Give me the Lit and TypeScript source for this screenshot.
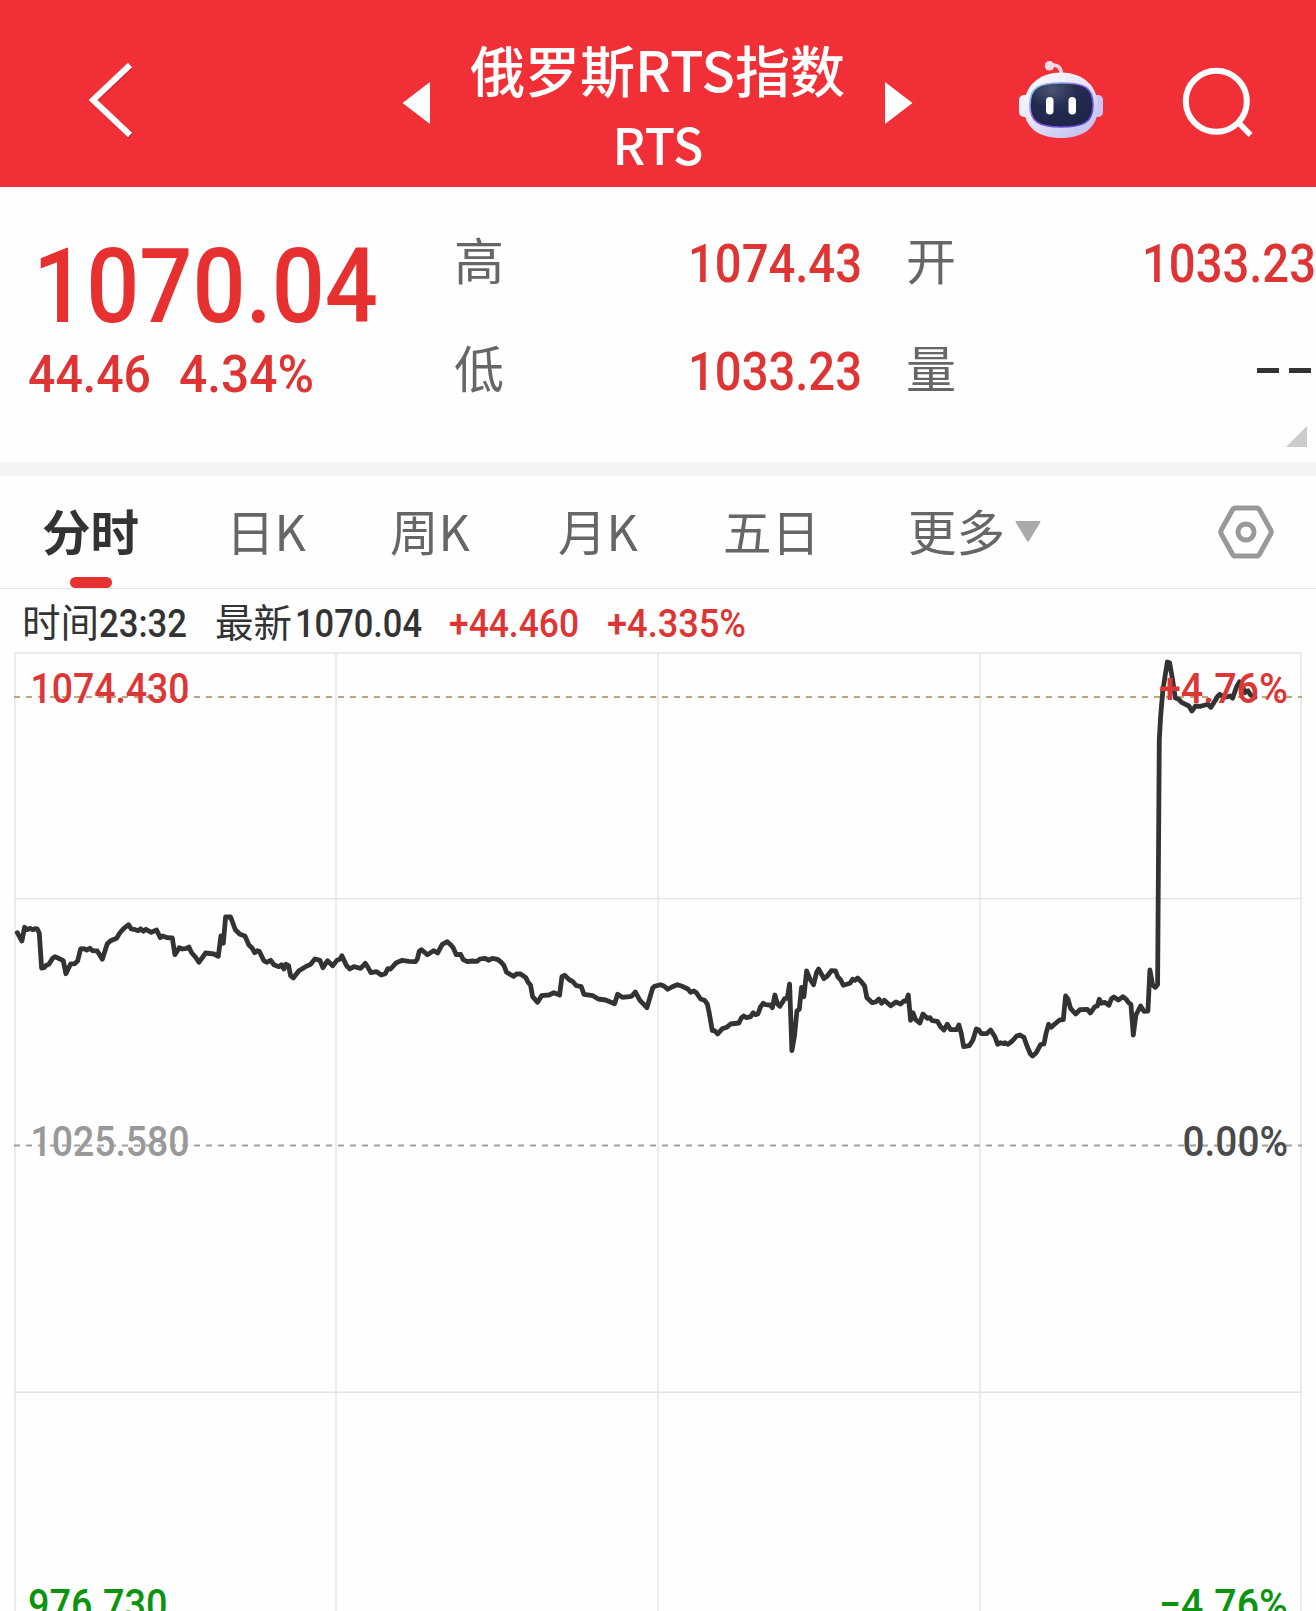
import { LitElement, html, svg, css } from "lit";
import { customElement, property } from "lit/decorators.js";

/** Figures set to a fixed run length; the box is exactly as tall as the digits. */
@customElement("fit-figure")
class FitFigure extends LitElement {
  @property() value = "";
  @property({ type: Number }) run = 100;
  @property({ type: Number }) cap = 30;
  @property({ type: Number }) weight = 500;

  static styles = css`
    :host { display: block; flex: none; }
    svg { display: block; overflow: visible; }
    text {
      font-family: Roboto, "Liberation Sans", sans-serif;
      fill: currentColor;
      white-space: pre;
    }
  `;

  render() {
    return html`<svg width=${this.run} height=${this.cap}>
      <text x="0" y=${this.cap} font-size=${this.cap / 0.711} font-weight=${this.weight}
        textLength=${this.run} lengthAdjust="spacingAndGlyphs">${this.value}</text>
    </svg>`;
  }
}

// Price trace, in thirds of a pixel; each part starts at its own x offset.
const TRACE: [number, string][] = [
  [0, "50,158 64,183 72,142 80,149 88,145 96,149 103,146 110,147 116,160 123,264 130,263 137,256 145,253 155,236 163,230 174,235 188,242 196,281 210,252 222,251 231,243 240,207 250,206 258,210 268,205 276,212 290,213 305,238 320,191 330,182 348,175 357,160 370,145 384,134 392,147 404,149 413,152 420,146 428,154 436,148 452,157 468,150 479,173 486,168 500,173 515,174 523,224 536,203 545,207 558,205 565,201 573,218 585,232 595,247 615,219 640,222 653,229 661,168 668,190 675,111 690,111 704,149 718,163 733,168 745,195 755,205 762,218 770,212 776,214 790,242 798,247 810,241 820,254 835,260 843,254 850,267 856,253 864,257 870,287 878,294 895,272 915,260 930,253 943,237 958,241 967,263 981,242 996,257 1010,240 1018,238 1024,227 1038,257 1048,267 1060,260 1080,265 1094,250 1102,262 1111,278 1128,275 1142,285 1154,281 1162,266 1170,267 1187,248 1205,241 1225,244 1244,245 1250,238 1256,213 1263,209 1280,224 1299,212 1311,219 1325,193"],
  [1290, "50,185 60,194 67,202 77,224 90,223 98,239 110,245 125,243 140,244 148,237 162,235 175,241 185,235 200,238 210,245 220,256 228,277 240,284 249,289 257,282 270,282 286,293 292,306 300,316 306,350 321,367 333,347 355,345 370,338 387,345 394,290 402,286 417,300 427,305 437,317 452,320 460,343 487,347 503,357 525,360 552,371 561,343 575,352 603,349 614,336 628,361 649,383 666,325 672,319 690,314 700,318 712,328 725,320 740,314 755,319 772,327 780,337 790,333 797,338 810,357 822,361 830,372 836,400 845,452 852,452 861,462 875,446 888,442 900,432 925,429 932,414 940,408 948,413 960,410 968,398 975,404 982,402 990,380 998,370 1005,374 1018,375 1025,383 1033,345 1040,371 1048,379 1062,356 1070,355 1077,312 1084,512 1092,465 1099,393 1106,388 1113,322 1120,350 1128,273 1138,297 1149,314 1158,277 1164,267 1180,296 1190,288 1202,272 1215,273 1222,291 1230,299 1238,316 1258,310 1266,298 1273,301 1281,294 1292,305 1302,318 1309,353 1325,368"],
  [2580, "45,366 55,357 63,370 71,361 90,377 106,366 120,372 130,363 137,363 143,345 150,421 157,398 165,419 178,429 187,402 200,415 208,413 215,422 230,424 240,440 250,450 260,433 270,449 288,449 295,435 302,460 309,500 326,497 337,480 347,447 355,450 362,461 378,461 390,450 403,470 411,493 420,488 430,491 433,488 442,493 455,483 468,468 478,465 490,472 500,500 509,521 516,528 527,518 540,494 550,492 557,457 564,433 572,442 585,430 597,420 608,419 615,348 622,357 630,385 645,402 658,389 680,388 689,399 703,380 710,378 716,358 723,370 732,367 745,376 752,357 760,351 773,360 787,350 797,358 803,367 811,373 818,465 826,405 840,378 850,394 862,393 868,270 876,315 884,322 891,314 894,-120 896,-420 900,-490 907,-570 920,-654 927,-652 936,-600 944,-546 953,-543 963,-533 985,-522 994,-507 1005,-522 1020,-521 1042,-527 1051,-518 1065,-540 1072,-552 1078,-557 1090,-548 1110,-552 1116,-545 1128,-580 1137,-595 1145,-585 1152,-562 1162,-568 1170,-555 1183,-548"],
];

const TOP = 589; // page y at which the plot begins
const tracePoints = TRACE.map(([ox, pts]) =>
  pts.split(" ").map((p) => {
    const [x, y] = p.split(",").map(Number);
    return `${((x + ox) / 3 + 0.6).toFixed(1)},${(880 - TOP + y / 3).toFixed(1)}`;
  }).join(" ")
).join(" ");

@customElement("price-chart")
class PriceChart extends LitElement {
  static styles = css`
    :host { display: block; }
    svg { display: block; }
    text { font-family: Roboto, "Liberation Sans", sans-serif; font-weight: 500; }
  `;

  private label(x: number, base: number, run: number, value: string, color: string) {
    return svg`<text x=${x} y=${base - TOP} font-size="42" textLength=${run}
      lengthAdjust="spacingAndGlyphs" fill=${color}>${value}</text>`;
  }

  render() {
    return html`<svg width="1316" height="1022" viewBox="0 0 1316 1022">
      <g stroke="#ebebeb" stroke-width="2" fill="none">
        <path d="M14 64H1302M15 64V1022M336 64V1022M658 64V1022M980 64V1022M1301 64V1022"/>
        <path stroke="#e2e2e2" stroke-width="1.4" d="M15 309.6H1301M15 803.3H1301"/>
      </g>
      <path d="M14 108H1302" stroke="#bda67c" stroke-width="2" stroke-dasharray="6 6"/>
      <path d="M14 556.5H1302" stroke="#a0a0a0" stroke-width="2.2" stroke-dasharray="6 6"/>
      <polyline points=${tracePoints} fill="none" stroke="#333" stroke-width="4.8"
        stroke-linejoin="round" stroke-linecap="round"/>
      ${this.label(30.5, 702.7, 159, "1074.430", "#dc3636")}
      ${this.label(1159, 702.7, 129, "+4.76%", "#dc3636")}
      ${this.label(30.5, 1155.7, 159, "1025.580", "#999")}
      ${this.label(1182.5, 1155.7, 105.5, "0.00%", "#4a4a4a")}
      ${this.label(28, 1618.7, 139.5, "976.730", "#0c930f")}
      ${this.label(1159, 1618.7, 129, "−4.76%", "#0c930f")}
    </svg>`;
  }
}

@customElement("app-root")
class AppRoot extends LitElement {
  static styles = css`
    :host {
      display: block;
      width: 1316px;
      height: 1611px;
      overflow: hidden;
      background: #fefefe;
      color: #333;
      font-family: "Noto Sans CJK SC", sans-serif;
    }
    * { box-sizing: border-box; }
    svg { display: block; flex: none; }
    header {
      height: 187px;
      background: #f12f36;
      color: #fff;
      display: grid;
      grid-template-columns: 402px 28px 455px 28px 106px 84px 80px 70px;
    }
    header svg { margin-top: 60px; overflow: visible; }
    .back { margin-left: 88px; }
    .search { margin-left: 78px; }
    .title { text-align: center; font-weight: 500; }
    .name { font-size: 55px; line-height: 60px; margin-top: 38px; white-space: nowrap; }
    .code { font-size: 50px; line-height: 60px; margin-top: 15px; padding-left: 1px; }
    .quote {
      height: 275px;
      display: grid;
      grid-template-columns: 455px 407px 454px;
    }
    .red { color: #de3434; }
    .last { padding: 61px 0 0 28px; color: #e73030; }
    .last .big { padding-left: 5px; }
    .change { display: flex; gap: 28px; margin-top: 33px; color: #de3434; }
    .stats {
      display: grid;
      grid-template-rows: 50px 50px 30px;
      row-gap: 58px;
      padding-top: 46px;
      color: #666;
      font-size: 50px;
      line-height: 50px;
    }
    .stat { display: flex; justify-content: space-between; align-items: center; }
    .stat span { margin-left: -1px; }
    .stat fit-figure { margin-top: 9px; }
    .col2 { padding-left: 45px; }
    .dashes { display: flex; gap: 10px; padding: 9px 5px 0 0; }
    .dashes i { width: 22px; height: 5px; background: #333; }
    .fold { justify-self: end; margin: -23px 9px 0 0; }
    .band { height: 14px; background: #f4f4f4; }
    nav {
      height: 113px;
      border-bottom: 1px solid #e6e6e6;
      display: grid;
      grid-template-columns: 226px 164px 168px 165px 185px 310px 1fr;
      font-size: 48.5px;
      line-height: 60px;
      color: #666;
      padding-top: 24px;
    }
    .tab { white-space: nowrap; }
    .active { color: #333; font-weight: 700; padding-left: 42px; }
    .active::after {
      content: "";
      display: block;
      width: 42px;
      height: 11px;
      border-radius: 5.5px;
      background: #e73030;
      margin: 17px 0 0 28px;
    }
    .more { display: flex; gap: 10px; }
    .more svg { margin-top: 21px; }
    .hex { margin-top: 5px; }
    .chart { display: grid; }
    .chart > * { grid-area: 1 / 1; }
    .legend {
      display: flex;
      align-items: flex-start;
      height: 60px;
      padding: 11px 0 0 22px;
      font-size: 38.5px;
      line-height: 40px;
    }
    .legend fit-figure { margin-top: 10px; }
    .legend span { width: 77px; white-space: nowrap; }
    .latest { margin-left: 28px; }
    .price { margin-left: 3px; }
    .delta { margin-left: 27px; }
    .percent { margin-left: 28px; }
  `;

  render() {
    return html`
      <header>
        <svg class="back" width="44" height="78" viewBox="88 60 44 78">
          <path d="M130.5 66.5L94 101L130.5 136.5" fill="none" stroke="#8a1a20" stroke-opacity=".35" stroke-width="6"/>
          <path d="M130 65L93 100L130 135" fill="none" stroke="#fff" stroke-width="6"/>
        </svg>
        <svg width="28" height="70" viewBox="402 60 28 70"><path d="M402.5 103L430 82V124Z" fill="#fff"/></svg>
        <div class="title">
          <div class="name">俄罗斯RTS指数</div>
          <div class="code">RTS</div>
        </div>
        <svg width="28" height="70" viewBox="885 60 28 70"><path d="M912.5 103L885 82V124Z" fill="#fff"/></svg>
        <i></i>
        <svg width="84" height="80" viewBox="1019 60 84 80">
          <defs>
            <linearGradient id="shell" x1="0" y1="0" x2=".75" y2="1">
              <stop offset="0" stop-color="#fff"/><stop offset=".5" stop-color="#e9e6f7"/><stop offset="1" stop-color="#c3c0f2"/>
            </linearGradient>
            <linearGradient id="rim" x1="0" y1="0" x2="1" y2="1">
              <stop offset="0" stop-color="#8fe3ee"/><stop offset=".45" stop-color="#8b5be8"/><stop offset="1" stop-color="#4b3fd8"/>
            </linearGradient>
            <radialGradient id="visor" cx=".35" cy=".15" r=".9">
              <stop offset="0" stop-color="#4a5473"/><stop offset=".45" stop-color="#232c50"/><stop offset="1" stop-color="#1c2547"/>
            </radialGradient>
          </defs>
          <path d="M1050 65.500C1057 64 1061 67 1061.500 74" fill="none" stroke="#f3d3e0" stroke-width="3.600"/>
          <circle cx="1049.500" cy="65.800" r="4.800" fill="#f3dbe9"/>
          <rect x="1019" y="95" width="12" height="22" rx="5" fill="#f1effb"/>
          <rect x="1091" y="95" width="12" height="22" rx="5" fill="#c9c6f3"/>
          <path d="M1061 72.500C1083 72.500 1098 86 1098 107C1098 128 1083 138 1061 138C1039 138 1024 128 1024 107C1024 86 1039 72.500 1061 72.500Z" fill="url(#shell)"/>
          <path d="M1061 83C1084 83 1093 87 1093 105C1093 122 1084 127 1061 127C1039 127 1030 122 1030 105C1030 87 1039 83 1061 83Z" fill="url(#visor)" stroke="url(#rim)" stroke-width="1.600"/>
          <rect x="1046" y="97" width="7.500" height="17.500" rx="3.750" fill="#fff"/>
          <rect x="1068.500" y="97" width="7.500" height="17.500" rx="3.750" fill="#fff"/>
        </svg>
        <svg class="search" width="70" height="80" viewBox="1181 60 70 80">
          <circle cx="1216.300" cy="101.300" r="30.500" fill="none" stroke="#fff" stroke-width="6"/>
          <path d="M1238.500 122.500L1250.500 135" stroke="#fff" stroke-width="5.600"/>
        </svg>
      </header>

      <section class="quote">
        <div class="last">
          <fit-figure class="big" value="1070.04" run="345" cap="74"></fit-figure>
          <div class="change">
            <fit-figure value="44.46" run="123" cap="37"></fit-figure>
            <fit-figure value="4.34%" run="135" cap="37"></fit-figure>
          </div>
        </div>
        <div class="stats">
          <div class="stat"><span>高</span><fit-figure class="red" value="1074.43" run="174" cap="37.5"></fit-figure></div>
          <div class="stat"><span>低</span><fit-figure class="red" value="1033.23" run="174" cap="37.5"></fit-figure></div>
        </div>
        <div class="stats col2">
          <div class="stat"><span>开</span><fit-figure class="red" value="1033.23" run="174" cap="37.5"></fit-figure></div>
          <div class="stat"><span>量</span><div class="dashes"><i></i><i></i></div></div>
          <svg class="fold" width="21" height="21"><path d="M0 21L21 0V21Z" fill="#ccc"/></svg>
        </div>
      </section>

      <div class="band"></div>

      <nav>
        <div class="tab active">分时</div>
        <div class="tab">日K</div>
        <div class="tab">周K</div>
        <div class="tab">月K</div>
        <div class="tab">五日</div>
        <div class="tab more">更多
          <svg width="26" height="21"><path d="M1.500 0H24.500Q26 0 25.200 1.600L14 20Q13 21.500 12 20L.8 1.600Q0 0 1.500 0Z" fill="#aaa"/></svg>
        </div>
        <svg class="hex" width="56" height="54" viewBox="0 0 56 54">
          <path d="M17.500 3H38.500Q40.500 3 41.500 4.800L52.600 24.800Q53.800 27 52.600 29.200L41.500 49.200Q40.500 51 38.500 51H17.500Q15.500 51 14.500 49.200L3.400 29.200Q2.200 27 3.400 24.800L14.500 4.800Q15.500 3 17.500 3Z" fill="none" stroke="#999" stroke-width="5"/>
          <circle cx="28" cy="27" r="8" fill="none" stroke="#999" stroke-width="5"/>
        </svg>
      </nav>

      <div class="chart">
        <price-chart></price-chart>
        <div class="legend">
          <span>时间</span><fit-figure value="23:32" run="88" cap="27"></fit-figure>
          <span class="latest">最新</span><fit-figure class="price" value="1070.04" run="127" cap="27"></fit-figure>
          <fit-figure class="red delta" value="+44.460" run="130" cap="27"></fit-figure>
          <fit-figure class="red percent" value="+4.335%" run="139" cap="27"></fit-figure>
        </div>
      </div>
    `;
  }
}
